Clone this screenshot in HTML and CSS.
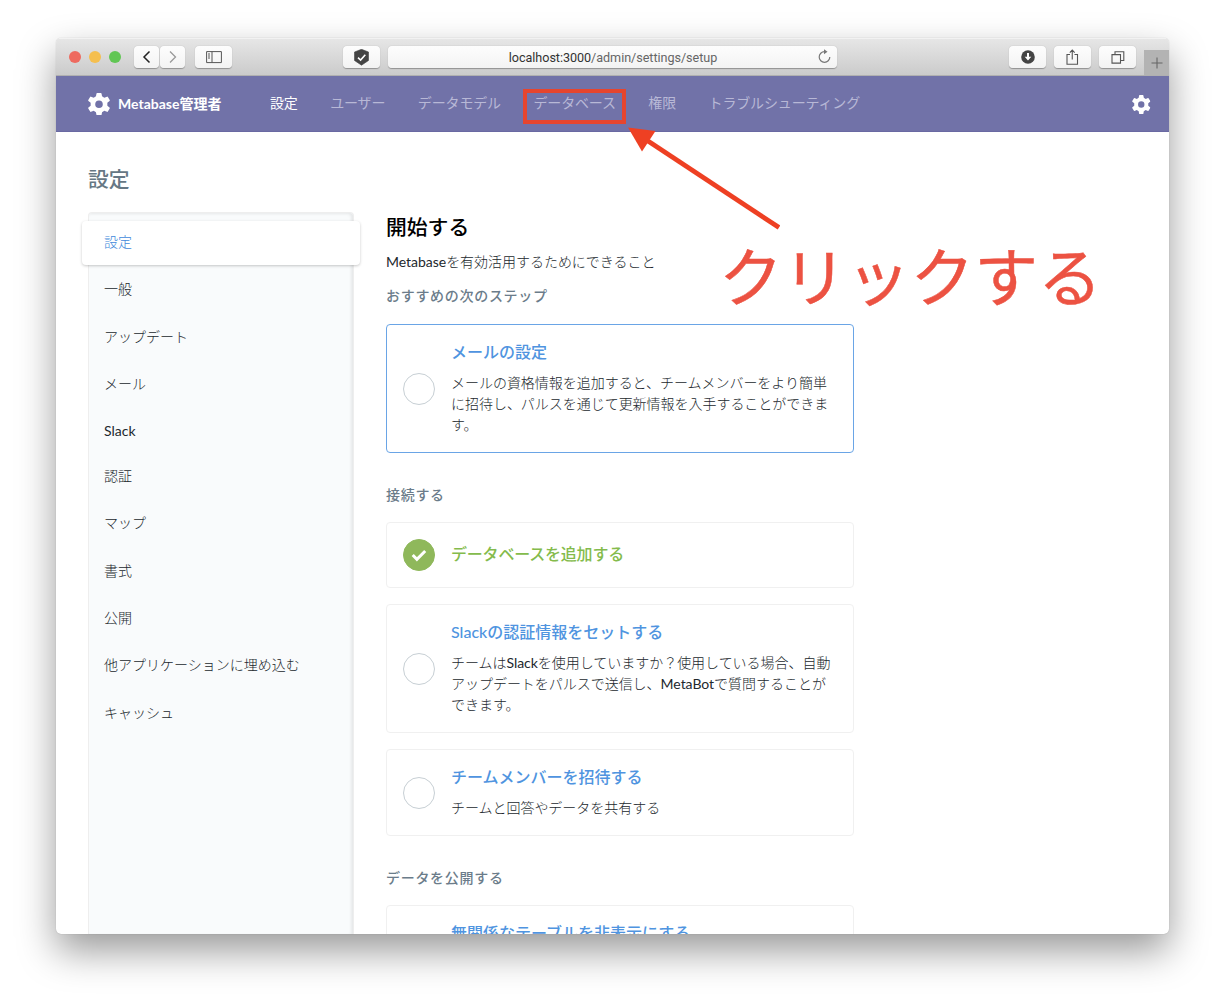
FILE: index.html
```html
<!DOCTYPE html>
<html lang="ja">
<head>
<meta charset="utf-8">
<title>Metabase管理者</title>
<link rel="stylesheet" href="styles.css">
</head>
<body>
<svg class="defs" width="0" height="0" aria-hidden="true">
  <symbol id="gear" viewBox="1.5 0 29 29.6">
    <path fill-rule="evenodd" d="M12.6 0.8Q12.8 0 13.6 0h4.8q.8 0 1 .8l.6 3.6 3 1.7 3.5-1.3q.8-.3 1.2.4l2.4 4.1q.4.7-.2 1.3l-2.9 2.3v3.8l2.9 2.3q.6.6.2 1.300l-2.400 4.100q-.4.7-1.200.4l-3.500-1.300-3 1.700-.6 3.600q-.2.8-1 .8h-4.800q-.8 0-1-.8l-.6-3.600-3-1.700-3.500 1.300q-.8.3-1.200-.4L1.900 20.300q-.4-.7.2-1.300L5 16.700v-3.800L2.100 10.600q-.6-.6-.2-1.300l2.400-4.100q.4-.7 1.200-.4L9 6.100l3-1.700zM16 9.800a5 5 0 1 0 0 10 5 5 0 1 0 0-10z"/>
  </symbol>
</svg>
<div class="window">
  <header class="toolbar">
    <div class="lights"><i class="red"></i><i class="yellow"></i><i class="green"></i></div>
    <div class="history">
      <span class="btn small"><svg width="10" height="14" viewBox="0 0 10 14"><path d="M7.500 1.500 2 7 7.500 12.500" fill="none" stroke="#222" stroke-width="1.500"/></svg></span>
      <span class="btn small"><svg width="10" height="14" viewBox="0 0 10 14"><path d="M2 1.500 7.500 7 2 12.500" fill="none" stroke="#999" stroke-width="1.300"/></svg></span>
    </div>
    <span class="btn sidebar-btn"><svg width="16" height="13" viewBox="0 0 16 13"><path d="M.6.6h14.800v11H.6zM6 .6v11M2 3h2M2 5h2M2 7h2" fill="none" stroke="#555" stroke-width="1"/></svg></span>
    <span class="btn shield"><svg width="16" height="17" viewBox="0 0 16 17"><path d="M7.500 .3 14.500 3v8.500l-7 4.700-7-4.700V3z" fill="#444" stroke="#444" stroke-width=".6" stroke-linejoin="round"/><path d="m4 8.700 2.600 2.400L11.300 5.700" fill="none" stroke="#fff" stroke-width="1.600"/></svg></span>
    <div class="address">
      <span class="url">localhost:3000<span>/admin/settings/setup</span></span>
      <svg class="reload" width="14" height="14" viewBox="0 0 14 14"><path d="M12.800 7a5.300 5.300 0 1 1-5.300-5.300h1.500" fill="none" stroke="#777" stroke-width="1.200"/><path d="M7-.7 10.500 1.800 7 4.200z" fill="#777"/></svg>
    </div>
    <span class="btn download"><svg width="14" height="14" viewBox="0 0 14 14"><circle cx="7" cy="7" r="6.800" fill="#444"/><path d="M6 3h2v3.800h2.300L7 10.500 3.700 6.800H6z" fill="#fff"/></svg></span>
    <span class="btn share"><svg width="13" height="16" viewBox="0 0 13 16"><path d="M4 5.500H1v9.700h10.500V5.500h-3M6.250 10.500V1.200M3.800 3.600l2.450-2.500L8.700 3.600" fill="none" stroke="#555" stroke-width="1.100"/></svg></span>
    <span class="btn tabs"><svg width="14" height="13" viewBox="0 0 14 13"><path d="M1 3.600h8.500v8.500H1zM4 3.500V.8h8.800v8.700H9.600" fill="none" stroke="#555" stroke-width="1.100"/></svg></span>
    <span class="new-tab"><svg width="12" height="12" viewBox="0 0 12 12"><path d="M6 .5v11M.5 6h11" stroke="#666" stroke-width="1.100"/></svg></span>
  </header>
  <nav class="nav">
    <svg class="logo"><use href="#gear"/></svg>
    <strong class="brand">Metabase管理者</strong>
    <div class="links">
      <a class="current">設定</a><a>ユーザー</a><a>データモデル</a><a>データベース</a><a>権限</a><a>トラブルシューティング</a>
    </div>
    <svg class="menu"><use href="#gear"/></svg>
  </nav>
  <main class="page">
    <aside class="side">
      <h2 class="side-title">設定</h2>
      <ul class="menu-list">
        <li class="active">設定</li>
        <li>一般</li>
        <li>アップデート</li>
        <li>メール</li>
        <li class="latin">Slack</li>
        <li>認証</li>
        <li>マップ</li>
        <li>書式</li>
        <li>公開</li>
        <li>他アプリケーションに埋め込む</li>
        <li>キャッシュ</li>
      </ul>
    </aside>
    <section class="content">
      <h1>開始する</h1>
      <p class="lead"><span class="en">Metabase</span>を有効活用するためにできること</p>
      <h3 class="first">おすすめの次のステップ</h3>
      <article class="card next">
        <i class="circle"></i>
        <div><h4>メールの設定</h4><p>メールの資格情報を追加すると、チームメンバーをより簡単<br>に招待し、パルスを通じて更新情報を入手することができま<br>す。</p></div>
      </article>
      <h3>接続する</h3>
      <article class="card">
        <i class="circle done"><svg width="16" height="13" viewBox="0 0 16 13"><path d="m1.700 6 4.200 4.300L14.200 2" fill="none" stroke="#fff" stroke-width="3"/></svg></i>
        <div><h4 class="complete">データベースを追加する</h4></div>
      </article>
      <article class="card">
        <i class="circle"></i>
        <div><h4>Slackの認証情報をセットする</h4><p>チームは<span class="en">Slack</span>を使用していますか？使用している場合、自動<br>アップデートをパルスで送信し、<span class="en">MetaBot</span>で質問することが<br>できます。</p></div>
      </article>
      <article class="card">
        <i class="circle"></i>
        <div><h4>チームメンバーを招待する</h4><p>チームと回答やデータを共有する</p></div>
      </article>
      <h3>データを公開する</h3>
      <article class="card partial">
        <i class="circle"></i>
        <div><h4>無関係なテーブルを非表示にする</h4></div>
      </article>
    </section>
  </main>
</div>
<div class="highlight"></div>
<svg class="arrow" width="160" height="110" viewBox="0 0 160 110"><path d="M28 21 159 107.500" stroke="#ee4023" stroke-width="4.800"/><path d="M8 7.500 35.500 11 22 31.500z" fill="#ee4023"/></svg>
<div class="callout">クリックする</div>
</body>
</html>
```
FILE: styles.css
```css
* { box-sizing: border-box; }
body {
  margin: 0;
  height: 1008px;
  padding: 38px 56px 0;
  overflow: hidden;
  position: relative;
  background: #fff;
  color: #22282d;
  font: 14px/21px Lato, "Noto Sans CJK JP", sans-serif;
}
h1, h2, h3, h4, p, ul { margin: 0; padding: 0; }
svg { display: block; flex: none; }
.defs { position: absolute; }
.window {
  height: 896px;
  width: 1113px;
  border-radius: 5px;
  overflow: hidden;
  display: flex;
  flex-direction: column;
  background: #fff;
  box-shadow: 0 17px 38px rgba(0, 0, 0, .4), 0 0 1px rgba(0, 0, 0, .3);
}
.toolbar {
  height: 38px;
  flex: none;
  display: flex;
  align-items: center;
  padding-left: 13px;
  background: linear-gradient(#e6e6e6, #cbcbcb);
  border-top: 1px solid #f2f2f2;
  border-bottom: 1px solid #b0b0b0;
}
.lights { display: flex; gap: 8px; margin-right: 13px; }
.lights i { width: 12px; height: 12px; border-radius: 50%; }
.red { background: #ee6a5f; }
.yellow { background: #f5bf4f; }
.green { background: #61c654; }
.history { display: flex; gap: 1px; margin-right: 10px; }
.btn, .address {
  height: 22px;
  border-radius: 4px;
  background: linear-gradient(#fdfdfd, #f3f3f3);
  box-shadow: 0 .5px 1px rgba(0, 0, 0, .3);
  display: flex;
  align-items: center;
  justify-content: center;
  flex: none;
}
.btn { width: 37px; }
.btn.small { width: 25px; }
.shield { margin-left: 111px; margin-right: 8px; }
.address { width: 449px; padding: 0 6px 0 21px; }
.url { flex: 1; padding-top: 2px; text-align: center; font: 12.600px/20px Roboto, "Liberation Sans", sans-serif; letter-spacing: -.04px; color: #333; }
.url span { color: #666; }
.reload { overflow: visible; }
.download { margin-left: 172px; }
.share, .tabs { margin-left: 8px; }
.new-tab {
  margin-left: auto;
  align-self: flex-end;
  width: 25px;
  height: 25px;
  display: flex;
  align-items: center;
  justify-content: center;
  background: #b3b3b3;
}
.nav {
  height: 56px;
  flex: none;
  display: flex;
  align-items: center;
  padding: 0 18.500px 0 32px;
  background: #7172a8;
  color: #fff;
  border-bottom: 1px solid #6969a2;
}
.nav svg { fill: #fff; margin-top: 1px; }
.logo { width: 22px; height: 22.500px; margin-right: 8px; }
.brand { font-weight: 700; width: 152px; white-space: nowrap; }
.links { display: flex; gap: 32.500px; padding-bottom: 2px; letter-spacing: -.15px; color: #b8b8d6; white-space: nowrap; }
.current { color: #fff; }
.menu { width: 18.500px; height: 19px; margin-left: auto; }
.page { flex: 1; min-height: 0; display: flex; padding-left: 26px; }
.side { width: 278px; margin-right: 26px; display: flex; flex-direction: column; }
.side-title {
  margin: 32px 0 0 6px;
  height: 48px;
  line-height: 30px;
  font-size: 20.800px;
  font-weight: 500;
  color: #667784;
}
.menu-list {
  flex: 1;
  margin: 0 6px 0 6px;
  padding-top: 8px;
  list-style: none;
  background: #f9fbfc;
  border: 1px solid #eee;
  border-width: 1px 1px 0;
  border-radius: 4px 4px 0 0;
  box-shadow: inset -2px 1px 3px rgba(0, 0, 0, .08);
}
.menu-list li { height: 47.400px; padding: 10px 0 0 15px; font-weight: 300; }
.menu-list .latin { height: 44.500px; font-weight: 400; }
.menu-list .active {
  height: 44px;
  margin: 0 -7px 3.200px;
  padding: 10px 22px;
  color: #4289db;
  background: #fff;
  border-radius: 4px;
  box-shadow: 0 1px 3px rgba(0, 0, 0, .22);
}
.content { width: 468px; padding-top: 80px; }
h1 { font-size: 20.800px; line-height: 30px; font-weight: 500; color: #000; }
.lead { margin-top: 9px; }
.lead, .card p { font-weight: 300; letter-spacing: -.03px; }
.en { font-weight: 400; }
h3 {
  margin: 31px 0 17px;
  line-height: 21px;
  font-size: 14px;
  font-weight: 500;
  letter-spacing: .7px;
  color: #6b7c8a;
}
h3.first { margin: 13px 0 18px; }
.card {
  display: flex;
  align-items: center;
  gap: 16px;
  padding: 16px;
  margin-bottom: 16px;
  border: 1px solid #f0f0f0;
  border-radius: 4px;
}
.card > div { margin: -1px 0 1px; }
.card.next { border-color: #6aa5e6; }
.card.partial { height: 90px; align-items: flex-start; }
.card.partial .circle { align-self: center; }
.circle {
  width: 32px;
  height: 32px;
  flex: none;
  border: 1px solid #c7cfd4;
  border-radius: 50%;
  display: flex;
  align-items: center;
  justify-content: center;
}
.done { background: #8fb85b; border-color: #8fb85b; }
h4 { font-size: 16px; line-height: 24px; font-weight: 500; color: #4f94e0; white-space: nowrap; }
h4.complete { color: #84bb4c; letter-spacing: -.2px; }
.card p { margin-top: 8px; white-space: nowrap; }
.highlight {
  position: absolute;
  left: 523px;
  top: 89px;
  width: 103px;
  height: 35px;
  border: 4px solid #e6452e;
}
.arrow { position: absolute; left: 620px; top: 120px; }
.callout {
  position: absolute;
  left: 719px;
  top: 228px;
  font: 400 63.800px/90px "Noto Sans CJK JP", sans-serif;
  color: #ec5242;
  -webkit-text-stroke: .5px #ec5242;
  white-space: nowrap;
}
```
